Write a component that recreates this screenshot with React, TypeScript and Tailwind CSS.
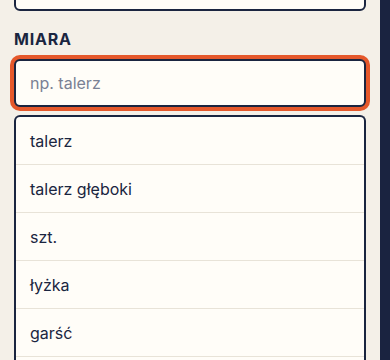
import React from "react";

const units = ["talerz", "talerz głęboki", "szt.", "łyżka", "garść"];

const App = () => {
  return (
    <div
      className="flex h-[360px] w-[390px] overflow-hidden bg-[#f4f0e8]"
      style={{ fontFamily: "Inter, 'Noto Sans', sans-serif" }}
    >
      <div className="flex-1 px-[14px]">
        {/* previous field, scrolled mostly out of view */}
        <div className="-mt-[37px] h-[48px] rounded-md border-2 border-[#1a2540] bg-[#fffdf8]" />

        <label className="mt-[16px] block text-base font-bold uppercase leading-6 tracking-wider text-[#1a2540]">
          Miara
        </label>

        <input
          type="text"
          placeholder="np. talerz"
          className="mt-2 block h-[48px] w-full rounded-md border-2 border-[#1a2540] bg-[#fffdf8] px-[14px] text-base text-[#1a2540] outline-none ring-4 ring-[#e5582b] placeholder:text-[#7a8194]"
        />

        {/* suggestions list, continues below the fold */}
        <ul className="mt-2 overflow-hidden rounded-t-md border-x-2 border-t-2 border-[#1a2540] bg-[#fffdf8] pb-4">
          {units.map((u) => (
            <li
              key={u}
              className="flex h-[48px] items-center border-b border-[#e8e3d8] px-[14px] text-base text-[#1a2540]"
            >
              {u}
            </li>
          ))}
        </ul>
      </div>
      <div className="w-[10px] bg-[#1a2340]" />
    </div>
  );
};

export default App;
